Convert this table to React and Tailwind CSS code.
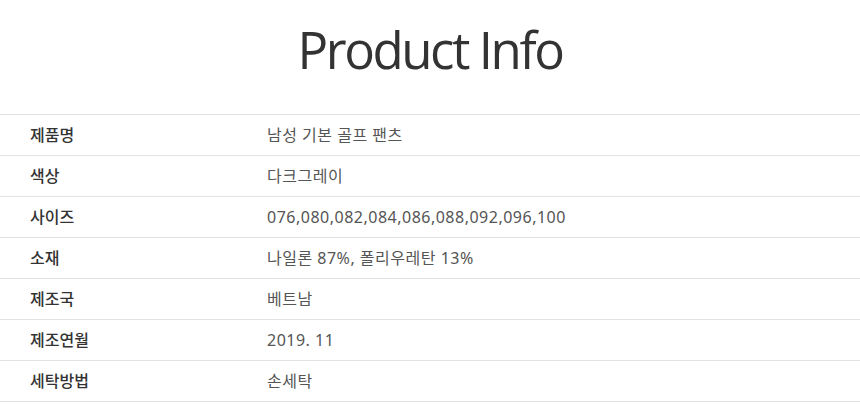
import React from "react";

const rows = [
  ["제품명", "남성 기본 골프 팬츠"],
  ["색상", "다크그레이"],
  ["사이즈", "076,080,082,084,086,088,092,096,100"],
  ["소재", "나일론 87%, 폴리우레탄 13%"],
  ["제조국", "베트남"],
  ["제조연월", "2019. 11"],
  ["세탁방법", "손세탁"],
];

const App = () => {
  return (
    <div className="w-[860px] bg-white font-['Noto_Sans','Noto_Sans_CJK_KR',sans-serif]">
      {/* Title */}
      <div className="h-[114px] flex items-center justify-center">
        <h1 className="text-[51px] leading-none font-medium text-[#333] font-['Open_Sans','Noto_Sans_CJK_KR',sans-serif] tracking-[-2.4px] pb-[16px]">
          Product Info
        </h1>
      </div>

      {/* Info table */}
      <div className="border-t border-[#e2e2e2]">
        {rows.map(([label, value]) => (
          <div key={label} className="flex items-center h-[41px] border-b border-[#e2e2e2]">
            <div className="w-[267px] pl-[30px] text-[16px] font-medium text-[#333]">{label}</div>
            <div className="flex-1 text-[16px] tracking-[0.5px] text-[#555]">{value}</div>
          </div>
        ))}
      </div>
    </div>
  );
};

export default App;
